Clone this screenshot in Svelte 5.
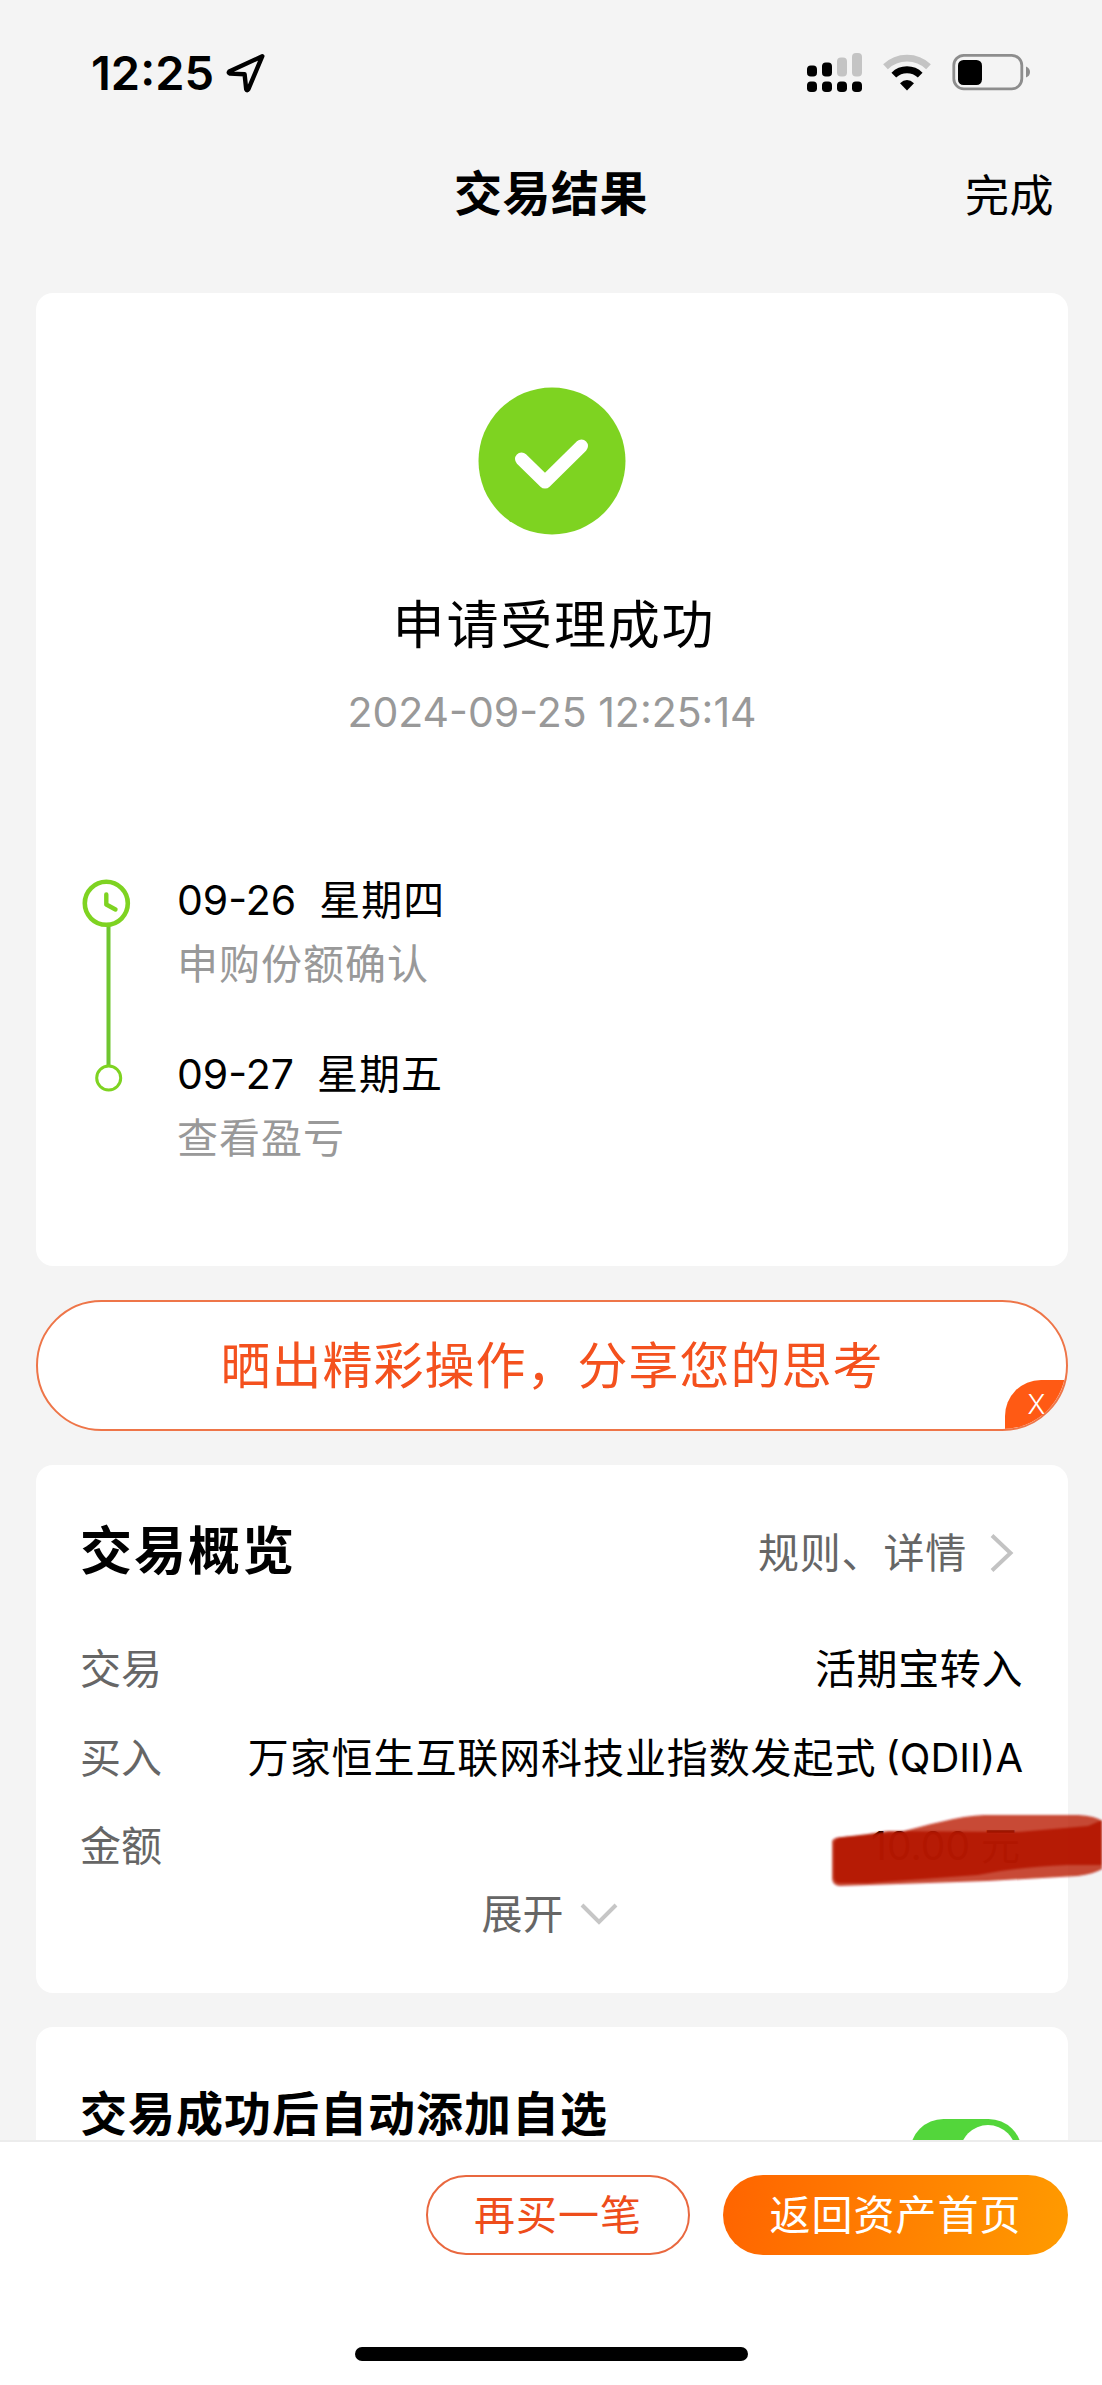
<script>
  const steps = [
    { date: '09-26', day: '星期四', note: '申购份额确认' },
    { date: '09-27', day: '星期五', note: '查看盈亏' },
  ];
</script>

<div class="screen">
  <header class="status">
    <div class="clock">
      <span class="time">12:25</span>
      <svg width="40" height="40" viewBox="0 0 40 40" fill="none" stroke="#000" stroke-width="4.400" stroke-linejoin="round">
        <path d="M36.3 3.2 3.2 18.6Q2 20 4 20.6L18.6 21.2 20.2 36.2Q21.2 38.3 22.4 36.2Z" />
      </svg>
    </div>
    <div class="signals">
      <svg width="56" height="40" viewBox="0 0 56 40">
        <g fill="#c4c4c4">
          <rect x="30" y="4.500" width="10" height="19" rx="4" />
          <rect x="45" y="0" width="10" height="23.500" rx="4" />
        </g>
        <rect x="0" y="12.500" width="10" height="11" rx="3.800" />
        <rect x="15" y="9.500" width="10" height="14" rx="3.800" />
        <rect x="0" y="28.500" width="10" height="10.500" rx="3.800" />
        <rect x="15" y="28.500" width="10" height="10.500" rx="3.800" />
        <rect x="30" y="28.500" width="10" height="10.500" rx="3.800" />
        <rect x="45" y="28.500" width="10" height="10.500" rx="3.800" />
      </svg>
      <svg class="wifi" width="48" height="38" viewBox="0 0 48 38" fill="none">
        <path d="M2.500 12.800A31 31 0 0 1 45.500 12.800" stroke="#c4c4c4" stroke-width="6.800" />
        <path d="M10.800 21.100A19 19 0 0 1 37.200 21.100" stroke="#000" stroke-width="6.800" />
        <path d="M24 36.500 17 29.300Q24 22.500 31 29.300Z" fill="#000" />
      </svg>
      <svg width="80" height="40" viewBox="0 0 80 40">
        <rect x="1.800" y="2.300" width="68" height="33.500" rx="10" fill="none" stroke="#8d8d8d" stroke-width="2.800" />
        <rect x="6" y="7" width="24" height="25" rx="5.500" />
        <path d="M74 13.500Q78 15 78 19T74 24.500Z" fill="#8d8d8d" />
      </svg>
    </div>
  </header>

  <nav class="nav">
    <h1>交易结果</h1>
    <span class="done">完成</span>
  </nav>

  <main class="content">
    <section class="card result">
      <svg class="check" width="148" height="148" viewBox="0 0 148 148" fill="none">
        <circle cx="74" cy="74" r="73.500" fill="#7ed321" />
        <path d="M43.500 72 67 95 103.500 59" stroke="#fff" stroke-width="13" stroke-linecap="round" stroke-linejoin="round" />
      </svg>
      <h2>申请受理成功</h2>
      <p class="stamp">2024-09-25 12:25:14</p>
      <div class="timeline">
        <svg width="56" height="200" viewBox="0 0 56 200" fill="none" stroke="#7ed321">
          <path d="M27.500 46V186" stroke="#6fc52f" stroke-width="4" />
          <circle cx="25.300" cy="24.300" r="21.500" fill="#fff" stroke-width="4.600" />
          <path d="M25.300 15.500V25.500L34.500 30.500" stroke-width="4.400" stroke-linecap="round" stroke-linejoin="round" />
          <circle cx="27.700" cy="199" r="12" fill="#fff" stroke-width="3" />
        </svg>
        <ul>
          {#each steps as step}
            <li>
              <div class="day"><span>{step.date}</span><span class="week">{step.day}</span></div>
              <div class="note">{step.note}</div>
            </li>
          {/each}
        </ul>
      </div>
    </section>

    <section class="share">
      <span>晒出精彩操作，分享您的思考</span>
      <button class="close" aria-label="关闭">X</button>
    </section>

    <section class="card overview">
      <div class="head">
        <h3>交易概览</h3>
        <div class="more">
          <span>规则、详情</span>
          <svg width="26" height="40" viewBox="0 0 26 40" fill="none" stroke="#c3c3c3" stroke-width="4"><path d="M3 2.500 21.500 20 3 37.500" /></svg>
        </div>
      </div>
      <div class="row"><span>交易</span><b>活期宝转入</b></div>
      <div class="row"><span>买入</span><b class="fund">万家恒生互联网科技业指数发起式<i>(QDII)A</i></b></div>
      <div class="row">
        <span>金额</span><b class="amount">10.00 元</b>
        <svg class="marker" width="274" height="80" viewBox="0 0 274 80">
          <defs>
            <filter id="soft" x="-5%" y="-10%" width="110%" height="120%"><feGaussianBlur stdDeviation="1.200" /></filter>
          </defs>
          <g filter="url(#soft)">
            <path d="M4 32Q6 28 14 28L68 24C100 16 130 7 156 6H250Q268 7 274 12V60Q266 65 250 67L160 72 12 77Q5 77 4 70Z" fill="#b91500" opacity=".79" />
            <path d="M6 34Q7 29 15 28L40 25 60 22 190 23 260 17 274 11V56L240 56Q190 58 150 66L40 74H12Q6 74 6 68Z" fill="#b51a02" opacity=".9" />
          </g>
        </svg>
      </div>
      <div class="expand">
        <span>展开</span>
        <svg width="38" height="24" viewBox="0 0 38 24" fill="none" stroke="#c6c6c6" stroke-width="4"><path d="M2 3 19 20 36 3" /></svg>
      </div>
    </section>

    <section class="card auto">
      <h4>交易成功后自动添加自选</h4>
      <div class="switch"><div class="knob"></div></div>
    </section>
  </main>

  <footer class="footer">
    <div class="actions">
      <button class="again">再买一笔</button>
      <button class="home">返回资产首页</button>
    </div>
    <div class="indicator"></div>
  </footer>
</div>

<style>
  :global(body) { margin: 0; background: #f4f4f4; }
  .screen {
    width: 1102px; height: 2385px; overflow: hidden;
    display: flex; flex-direction: column;
    background: #f4f4f4; color: #000;
    font-family: Inter, "Noto Sans CJK SC", sans-serif;
    font-size: 41px; line-height: 60px;
  }
  h1, h2, h3, h4, p, ul, li { margin: 0; padding: 0; list-style: none; }
  button { border: 0; padding: 0; font: inherit; box-sizing: border-box; }
  svg { display: block; flex: none; }

  .status {
    flex: none; height: 146px; box-sizing: border-box;
    padding: 43px 70px 0 91px;
    display: flex; justify-content: space-between; align-items: flex-start;
  }
  .clock { display: flex; align-items: center; gap: 12px; }
  .time { font-size: 47px; font-weight: 600; }
  .signals { display: flex; align-items: center; padding-top: 10px; }
  .wifi { margin: 0 21px 0 20px; }

  .nav {
    flex: none; height: 147px; box-sizing: border-box; padding: 18px 48px 0 0;
    display: grid; grid-template-columns: 1fr auto 1fr; align-items: start;
  }
  h1 { grid-column: 2; font-size: 48px; font-weight: 700; padding-left: 48px; letter-spacing: .5px; }
  .done { justify-self: end; font-size: 44px; padding-top: 2px; letter-spacing: .5px; }

  .content { flex: none; height: 1847px; overflow: hidden; display: flex; flex-direction: column; gap: 34px; padding: 0 34px 0 36px; }
  .card { flex: none; background: #fff; border-radius: 17px; box-sizing: border-box; }

  .result { height: 973px; padding-top: 94px; display: flex; flex-direction: column; align-items: center; }
  h2 { font-size: 52px; font-weight: 400; letter-spacing: 1.8px; padding-left: 4px; margin-top: 61px; }
  .stamp { font-size: 41px; color: #999; margin-top: 26px; }
  .timeline { align-self: stretch; display: flex; margin-top: 137px; padding-left: 45px; gap: 40px; }
  .timeline svg { overflow: visible; }
  .timeline ul { display: flex; flex-direction: column; gap: 50px; margin-top: -9px; }
  li { height: 124px; }
  .day { display: flex; gap: 23px; }
  .week { letter-spacing: 1px; }
  .note { color: #999; margin-top: 4px; letter-spacing: 1px; }

  .share {
    flex: none; position: relative; height: 131px; box-sizing: border-box; overflow: hidden;
    border: 2px solid #ee7548; border-radius: 66px; background: #fff;
    color: #f4511e; font-size: 50px; letter-spacing: 1px;
    display: flex; align-items: center; justify-content: center;
  }
  .close {
    position: absolute; right: -2px; bottom: -1px; width: 63px; height: 50px;
    border-radius: 36px 0 0 0; background: #ff5a14; color: #fff;
    font-size: 27px; font-weight: 300; line-height: 50px;
  }

  .overview { height: 528px; padding: 57px 45px 0 44px; }
  .head { display: flex; justify-content: space-between; height: 117px; }
  h3 { font-size: 52px; font-weight: 700; letter-spacing: 2px; }
  .more { height: 60px; padding-top: 1px; display: flex; align-items: center; gap: 22px; color: #666; letter-spacing: .8px; padding-right: 8px; }
  .row { position: relative; height: 88.500px; display: flex; justify-content: space-between; color: #666; }
  .row b { font-weight: 400; color: #000; letter-spacing: .6px; }
  .row .fund { display: flex; gap: 9px; letter-spacing: .9px; }
  .fund i { font-style: normal; font-size: 40px; letter-spacing: 0; }
  .row .amount { font-size: 39px; letter-spacing: 0; padding: 0 3px 0 0; color: #000; }
  .marker { position: absolute; left: 748px; top: -7px; }
  .expand { display: flex; align-items: center; justify-content: center; gap: 16px; color: #666; height: 60px; margin: -21px 4px 0 0; }

  .auto { height: 200px; padding: 63px 46px 0 44px; display: flex; justify-content: space-between; align-items: flex-start; }
  h4 { font-size: 47px; font-weight: 700; letter-spacing: 1px; line-height: 48px; }
  .switch { width: 112px; height: 67px; border-radius: 34px; background: #53d63b; margin-top: 29px; display: flex; justify-content: flex-end; align-items: center; box-sizing: border-box; padding-right: 6px; }
  .knob { width: 56px; height: 56px; border-radius: 50%; background: #fff; }

  .footer { flex: none; height: 245px; box-sizing: border-box; background: #fff; border-top: 2px solid #ececec; padding-top: 33px; display: flex; flex-direction: column; align-items: center; }
  .actions { align-self: stretch; display: flex; justify-content: flex-end; gap: 33px; padding-right: 34px; }
  .actions button { height: 80px; border-radius: 40px; letter-spacing: 1px; line-height: 76px; }
  .again { width: 264px; border: 2px solid #e9683f; background: #fff; color: #ee4d1b; }
  .home { width: 345px; background: linear-gradient(100deg, #ff6400, #ff9b00); color: #fff; }
  .indicator { width: 393px; height: 14px; border-radius: 7px; background: #000; margin-top: 92px; }
</style>
